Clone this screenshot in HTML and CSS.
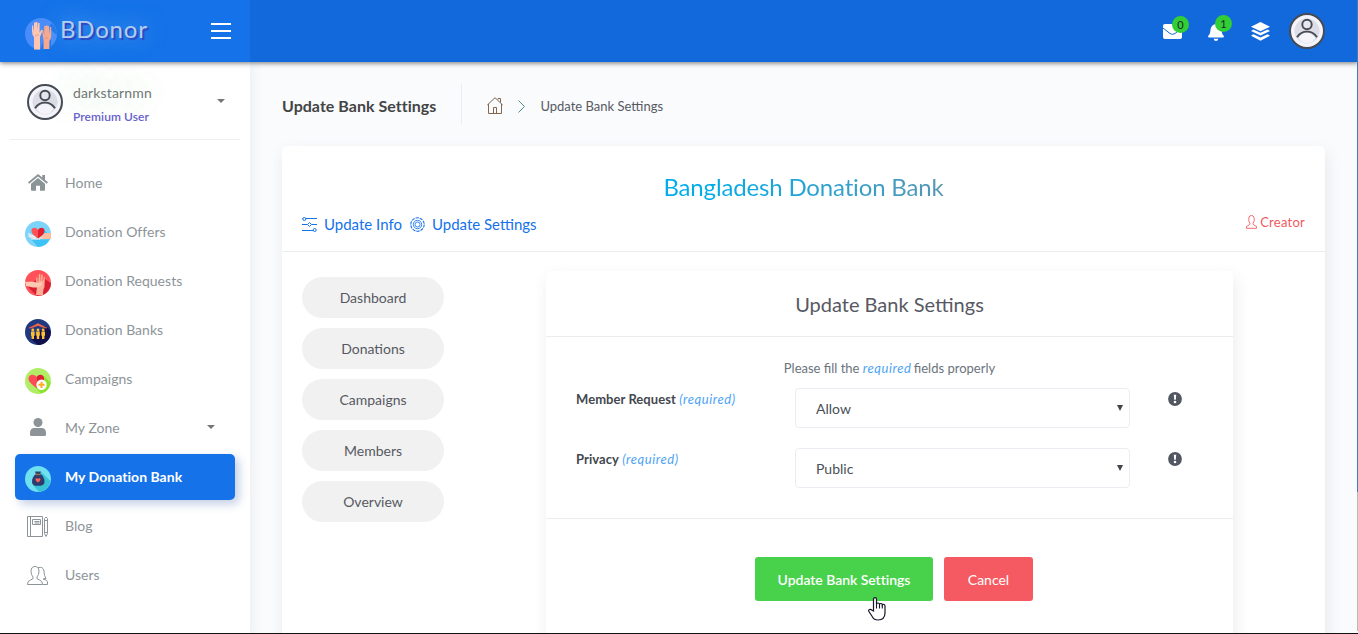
FILE: index.html
```html
<!DOCTYPE html>
<html lang="en">
<head>
<meta charset="utf-8">
<title>Update Bank Settings</title>
<link rel="stylesheet" href="styles.css">
</head>
<body>
<svg class="defs" width="0" height="0">
  <symbol id="avatar" viewBox="0 0 36 36">
    <circle cx="18" cy="18" r="17" fill="#f4f4fa" stroke="#464b54" stroke-width="2"/>
    <circle cx="18" cy="18" r="12.5" fill="#dcdde6"/>
    <path d="M9.500 25Q18 14 26.500 25L23 29Q18 31 13 29Z" fill="#f4f4fa"/>
    <circle cx="18" cy="11.500" r="4.700" fill="#e6e7ef" stroke="#464b54" stroke-width="1.900"/>
    <path d="M8 24.200C13 16.800 23 16.800 28 24.200" fill="none" stroke="#464b54" stroke-width="1.900"/>
  </symbol>
  <symbol id="info" viewBox="0 0 14 14">
    <circle cx="7" cy="7" r="6.900" fill="#515660"/>
    <path d="M5.800 2.700h2.400l-.4 5H6.200z" fill="#fff"/><circle cx="7" cy="10" r="1.300" fill="#fff"/>
  </symbol>
</svg>
<div class="app">
  <header class="header">
    <div class="brand">
      <svg class="brand-icon" width="32" height="32" viewBox="0 0 32 32">
        <circle cx="16" cy="16" r="16" fill="#4a8dfa"/>
        <path d="M26 5Q32 9 32 17L26 12V32H15z" fill="#1572e8" opacity=".8"/>
        <path d="M7 8L8 7l1 7V4.500h1.700V12V4h1.700v8L13 5h1.600v9.500l2-3 1 1L15 19v12.500H9V19q-2-2-2-6z" fill="#ffc5b3"/>
        <path d="M17 12h1.200l1 5V8h1.600v7V7.500h1.700V15V8h1.600v8l.8-7h1.300v9q0 3-1.800 5v8H18.500v-8.500z" fill="#f7a88e"/>
        <path d="M10 18q2-2 4-1M19 21q3-2 4-1" fill="none" stroke="#df8e79" stroke-width=".7"/>
      </svg>
      <span class="brand-name">BDonor</span>
      <svg class="burger" width="20" height="16" viewBox="0 0 20 16"><path d="M0 1h20M0 8h20M0 15h20" stroke="#fff" stroke-width="2"/></svg>
    </div>
    <nav class="topnav">
      <div class="top-item mail">
        <svg width="19" height="15" viewBox="0 0 19 15"><rect width="19" height="15" rx="2" fill="#fff"/><path d="M0 4l7 5.500q2.500 1.900 5 0L19 4" fill="none" stroke="#1269db" stroke-width="1"/></svg>
        <span class="count">0</span>
      </div>
      <div class="top-item bell">
        <svg width="16" height="18" viewBox="0 0 16 18"><path d="M8 0q1.200 0 1.200 1.300Q13 2.300 13.500 7c.3 3 .8 4.500 2.200 5.800q.7 1.700-.9 1.700H1.200q-1.600 0-.9-1.700C1.700 11.500 2.200 10 2.500 7Q3 2.300 6.800 1.300 6.800 0 8 0zM5.700 15.700h4.600Q10 18 8 18t-2.300-2.300z" fill="#fff"/></svg>
        <span class="count">1</span>
      </div>
      <svg class="layers" width="19" height="19" viewBox="0 0 19 19" fill="#fff"><path d="M9.500 0L19 4.700 9.500 9.200 0 4.700zM2.400 7.500l7.100 3.300 7.100-3.300L19 9 9.500 13.500 0 9zM2.400 12.200l7.100 3.300 7.100-3.300 2.400 1.600L9.500 18.700 0 13.800z"/></svg>
      <svg class="top-avatar" width="36" height="36"><use href="#avatar"/></svg>
    </nav>
  </header>

  <div class="body">
    <aside class="sidebar">
      <div class="user">
        <svg width="36" height="36"><use href="#avatar"/></svg>
        <div class="user-text"><span class="user-name">darkstarnmn</span><span class="user-role">Premium User</span></div>
        <i class="caret"></i>
      </div>
      <ul class="menu">
        <li class="item"><span class="icon"><svg width="20" height="17" viewBox="0 0 20 17" fill="#8d9498"><path d="M10 0l4.300 3.500V1H17v4.800l3 2.500-1.200 1.400L10 2.600 1.200 9.700 0 8.300z"/><path d="M10 4l7 5.800V16q0 .8-.8.800H12v-5H8v5H3.800Q3 16.800 3 16V9.800z"/></svg></span>Home</li>
        <li class="item"><span class="icon pic"><svg width="26" height="26" viewBox="0 0 26 26"><circle cx="13" cy="13" r="13" fill="#7dd4fb"/><path d="M6 18L19 9l6.800 6A13 13 0 0 1 13 26z" fill="#3cc2f4"/><path d="M3 13l6 2h8l3-3h6v6l-6 .3H9L4 16.500z" fill="#d5dce2"/><path d="M16 15l4-3h6v6h-8z" fill="#ffbd9f"/><path d="M3 12.500l7 3M3.500 15l7 1.500M6 18h9" stroke="#f4f5f6"/><path d="M13 17.500C7 13.500 6.500 11.500 6.500 9.500 6.500 6.500 11 5.500 13 9z" fill="#ff5157"/><path d="M13 17.500C19 13.500 19.500 11.500 19.500 9.500 19.500 6.500 15 5.500 13 9z" fill="#e31e2d"/></svg></span>Donation Offers</li>
        <li class="item"><span class="icon pic"><svg width="26" height="26" viewBox="0 0 26 26"><circle cx="13" cy="13" r="13" fill="#ff5157"/><path d="M0 14L18 8l8 5A13 13 0 0 1 17 25.300L12 26 4 18z" fill="#d91e32"/><path d="M11 25l1-8-1-7 1-4 1 7 1-9 1.300.2V12l1-7.500 1.400.2V12l1-5 1.200.3-.5 10Q18 19 18 25.500z" fill="#ffae98"/><path d="M0 12l8-.5 5 1.500 4-1v3l-4 2.500H8L1 16z" fill="#ffc8b3"/></svg></span>Donation Requests</li>
        <li class="item"><span class="icon pic"><svg width="26" height="26" viewBox="0 0 26 26"><circle cx="13" cy="13" r="13" fill="#203a82"/><path d="M21 7l4.700 5A13 13 0 0 1 13 26L6 20z" fill="#11104d"/><path d="M4 9l9-4.500L22 9H20L13 6.500 6 9z" fill="#ff7652" stroke="#dc553c" stroke-width=".6"/><g fill="#ffc02f"><circle cx="7.800" cy="11" r="1.400"/><circle cx="13" cy="11" r="1.400"/><circle cx="18.200" cy="11" r="1.400"/><path d="M6 12.500h3.600v4.200H9V20H6.600v-3.300H6zM11.200 12.500h3.600v4.200h-.6V20h-2.400v-3.300h-.6zM16.400 12.500H20v4.200h-.6V20H17v-3.300h-.6z"/></g></svg></span>Donation Banks</li>
        <li class="item"><span class="icon pic"><svg width="26" height="26" viewBox="0 0 26 26"><circle cx="13" cy="13" r="13" fill="#b3ed68"/><path d="M8 17L19 8l6.500 7A13 13 0 0 1 16 25.500z" fill="#8ce22c"/><path d="M11.500 20C4 14.500 3.500 12.500 3.500 10.500 3.500 6.500 9 5.500 11.500 9z" fill="#ff4c57"/><path d="M11.500 20C18 15.500 19 13 19 10.500 19 6.500 14 5.500 11.500 9z" fill="#e21d35"/><circle cx="16.500" cy="16.800" r="5.200" fill="#fff"/><path d="M16.500 13.700v6.200M13.400 16.800h6.200" stroke="#ffab24" stroke-width="2"/></svg></span>Campaigns</li>
        <li class="item"><span class="icon"><svg width="16" height="18" viewBox="0 0 16 18" fill="#8d9498"><circle cx="8" cy="4.500" r="4.500"/><path d="M4.500 10h7Q16 10 16 15v1.500q0 1.500-1.500 1.500h-13Q0 18 0 16.500V15q0-5 4.500-5z"/></svg></span>My Zone<i class="caret"></i></li>
        <li class="item active"><span class="icon pic"><svg width="26" height="26" viewBox="0 0 26 26"><circle cx="13" cy="13" r="13" fill="#6fe0ef"/><path d="M16 6l9.500 9A13 13 0 0 1 14 26L8 19z" fill="#37c3d5"/><path d="M11 8h4.500q4 3 4 7.500 0 4-4 4.200h-5Q7 19.500 7 15.500 7 11 11 8z" fill="#2c3c6f"/><path d="M10 5.500h6L15 8.500h-4z" fill="#344266"/><path d="M10.500 8.500h5" stroke="#9c7350" stroke-width="1.300"/><path d="M13 16.500c-4-2.700-2.500-5.500 0-3.700 2.500-1.800 4 1 0 3.700z" fill="#ff6155"/></svg></span>My Donation Bank</li>
        <li class="item"><span class="icon low"><svg width="21" height="22" viewBox="0 0 21 22" fill="none" stroke="#8d9498"><path d="M.5.500h15v20H.5zM3.500.500v20M5.500 3.500h8v5h-8zM7.500 5.500h5M7.500 7h5M17.500 2.500q1.500-3 3 0v15l-1.500 3-1.500-3zM17.500 4.500h3M17.500 16.500h3"/></svg></span>Blog</li>
        <li class="item"><span class="icon low"><svg width="21" height="20" viewBox="0 0 21 20" fill="none" stroke="#8d9498"><path d="M.5 18.500q-.3-3.500 3-4.500 3.500-.8 2.500-3Q4 9 4 5q.2-4.500 4-4.500T12 5q0 4-2 6-1 2.200 2.500 3 3.300 1 3 4.500zM11 1.800q5-1.800 6 3.200 0 5 2 7.500l-3 .5q4 1 4.500 2.500v3h-4.500"/></svg></span>Users</li>
      </ul>
    </aside>

    <main class="main">
      <div class="page-head">
        <h1 class="page-title">Update Bank Settings</h1>
        <div class="crumbs">
          <svg class="crumb-home" width="16" height="17" viewBox="0 0 16 17" fill="none" stroke="#84654d"><path d="M.3 8L8 .7 15.700 8M1.500 7v9.500h13V7M6.500 16.500v-6h3v6M11 2.500V1.500h2.500v4"/></svg>
          <svg class="crumb-sep" width="7" height="13" viewBox="0 0 7 13" fill="none" stroke="#4d8f83"><path d="M.5.500l6 6-6 6"/></svg>
          <span>Update Bank Settings</span>
        </div>
      </div>

      <section class="card">
        <div class="card-head">
          <h2 class="bank-name">Bangladesh Donation Bank</h2>
          <div class="links">
            <a class="link"><svg width="15" height="15" viewBox="0 0 15 15" fill="none" stroke="#1572e8"><path d="M0 1.500h.5M4 1.500h11M0 7.500h5.500M9.500 7.500H15M0 13.500h11"/><circle cx="2.300" cy="2" r="1.500"/><path d="M5.500 7.500l2-2 2 2-2 2z"/><circle cx="12.700" cy="13" r="1.500"/></svg>Update Info</a>
            <a class="link gear"><svg width="15" height="15" viewBox="0 0 15 15" fill="none" stroke="#1572e8" stroke-width=".85"><circle cx="7.500" cy="7.500" r="6.700" stroke-width="1.100" stroke-dasharray="3.200 1"/><circle cx="7.500" cy="7.500" r="4.200"/><circle cx="7.500" cy="7.500" r="2.500"/></svg>Update Settings</a>
            <span class="creator"><svg width="11" height="14" viewBox="0 0 11 14" fill="none" stroke="#f25961" stroke-width=".9"><path d="M.5 13.300v-1.800L3.800 9.500Q4.500 8.500 3 6.500 2 .500 5.500.500T8 6.500Q6.500 8.500 7.200 9.500l3.300 2v1.800z"/></svg>Creator</span>
          </div>
        </div>
        <div class="card-body">
          <nav class="pills"><a>Dashboard</a><a>Donations</a><a>Campaigns</a><a>Members</a><a>Overview</a></nav>
          <form class="panel">
            <h3 class="panel-title">Update Bank Settings</h3>
            <div class="fields">
              <p class="hint">Please fill the <em>required</em> fields properly</p>
              <div class="field"><label><b>Member Request</b> <em>(required)</em></label><div class="select">Allow<i></i></div><svg class="info" width="14" height="14"><use href="#info"/></svg></div>
              <div class="field"><label><b>Privacy</b> <em>(required)</em></label><div class="select">Public<i></i></div><svg class="info" width="14" height="14"><use href="#info"/></svg></div>
            </div>
            <div class="actions"><button type="button" class="btn save">Update Bank Settings</button><button type="button" class="btn cancel">Cancel</button></div>
          </form>
        </div>
      </section>
    </main>
  </div>
  <svg class="cursor" width="18" height="24" viewBox="0 0 18 24"><path d="M5.500 14V2.500Q5.500.700 7 .700t1.500 1.800V7q.3-1 1.500-1t1.500 1.200q.3-.8 1.500-.7t1.300 1.300q.4-.7 1.500-.5T17 9v7q-.2 7-7 7-4 0-5.500-3L.8 14.300q-.5-1.300.7-1.800t2.200.5z" fill="#fff" stroke="#15152b" stroke-width="1.200"/><path d="M8.500 7v4.500M11.500 7.500v4M14.300 8v3.500" stroke="#15152b" stroke-width="1.100"/></svg>
  <div class="scrollbar"></div>
</div>
</body>
</html>
```
FILE: styles.css
```css
* { box-sizing: border-box; }
body { margin: 0; font-family: Lato, "Liberation Sans", sans-serif; font-size: 14px; color: #575962; }
h1, h2, h3, p, ul { margin: 0; padding: 0; }
svg { display: block; flex: none; }
.defs { position: absolute; }

.app { position: relative; width: 1358px; height: 634px; overflow: hidden; display: flex; flex-direction: column; background: #f9fbfd; border-bottom: 1px solid #111; }
.header { position: relative; z-index: 2; display: flex; flex: none; height: 62px; background: #1269db; box-shadow: 0 1px 5px rgba(0, 0, 0, .55); }
.brand { display: flex; align-items: center; width: 250px; padding: 0 19px 0 25px; background: #1572e8; }
.brand-icon { margin-top: 6px; }
.brand-name { margin: -4px 0 0 3px; font-size: 24px; line-height: 30px; letter-spacing: .8px; color: #b4cdec; text-shadow: 2px 2px 1px #2d46bd, 0 0 22px rgba(150, 220, 255, .7), 3px 62px 34px rgba(70, 210, 120, .3); }
.burger { margin-left: auto; margin-top: -1px; }
.topnav { display: flex; align-items: center; margin-left: auto; padding-right: 33px; }
.top-item { position: relative; }
.mail { margin-right: 26px; }
.bell { margin: 1px 27px 0 0; }
.count { position: absolute; left: 9px; top: -8px; width: 17px; height: 17px; border-radius: 50%; background: #31ce36; color: #20232b; font-size: 11px; line-height: 17px; text-align: center; }
.bell .count { left: 7px; top: -8px; }
.layers { margin-right: 19px; }

.body { display: flex; flex: 1; min-height: 0; }
.sidebar { width: 250px; flex: none; background: #fff; box-shadow: 4px 4px 10px rgba(69, 65, 78, .06); }
.user { display: flex; align-items: center; height: 78px; margin: 0 10px; padding: 2px 15px 0 17px; border-bottom: 1px solid #eee; }
.user-text { display: flex; flex-direction: column; margin: 7px 0 0 10px; }
.user-name { font-size: 14px; line-height: 20px; color: #777; letter-spacing: .15px; }
.user-role { margin-top: 4px; font-size: 12px; line-height: 20px; font-weight: 600; color: #6861ce; letter-spacing: .08px; }
.user .caret { margin-top: -2px; }
.caret { margin-left: auto; border: 4px solid transparent; border-top-color: #777; border-bottom: 0; }
.menu { display: flex; flex-direction: column; gap: 3px; padding: 20px 15px; list-style: none; }
.item { display: flex; align-items: center; height: 46px; padding: 0 20px 2px 10px; border-radius: 5px; font-size: 14px; color: #8d9498; letter-spacing: .03px; }
.icon { display: flex; justify-content: center; width: 26px; margin-right: 14px; }
.icon svg { margin-left: -1px; }
.pic svg { margin-left: 0; }
.pic { padding-top: 5px; }
.low { padding-top: 3px; }
.item.active { background: #1572e8; color: #fff; font-weight: 700; box-shadow: 4px 4px 10px rgba(21, 70, 150, .26); }

.main { flex: 1; padding: 21px 33px 0 32px; }
.page-head { display: flex; align-items: center; height: 42px; }
.page-title { padding-top: 3px; font-size: 16px; font-weight: 700; line-height: 24px; color: #444; letter-spacing: 0.03px; }
.crumbs { display: flex; align-items: center; height: 40px; margin-left: 25px; padding: 4px 0 0 25px; border-left: 1px solid #ebedf2; font-size: 13px; color: #575962; }
.crumb-home { margin-top: -2px; }
.crumb-sep { margin: 0 15px; }
.card { margin-top: 21px; height: 560px; border-radius: 5px; background: #fff; box-shadow: 2px 6px 15px rgba(69, 65, 78, .1); }
.card-head { height: 106px; padding: 23px 20px 0; border-bottom: 1px solid #ebecec; }
.bank-name { width: max-content; margin: 0 auto; font-size: 24px; font-weight: 400; line-height: 36px; letter-spacing: -.16px; color: transparent; background: linear-gradient(90deg, #00ace9 15%, #5697b5); background-clip: text; }
.links { display: flex; align-items: center; margin-top: 6px; height: 26px; font-size: 15px; color: #1572e8; }
.link { display: flex; align-items: center; gap: 7px; }
.gear { margin-left: 8px; }
.creator { display: flex; align-items: center; gap: 3px; margin: -4px 0 0 auto; font-size: 13px; letter-spacing: .25px; color: #f25961; }
.card-body { display: flex; justify-content: space-between; padding: 20px 92px 0 20px; }
.pills { display: flex; flex-direction: column; gap: 10px; width: 142px; padding-top: 5px; }
.pills a { height: 41px; border-radius: 21px; background: #f1f1f1; color: #575962; font-size: 14px; line-height: 42px; text-align: center; }
.panel { width: 687px; height: 440px; margin-top: -1px; border-radius: 5px; background: #fff; box-shadow: 2px 6px 15px rgba(69, 65, 78, .1); }
.panel-title { height: 66px; border-bottom: 1px solid #ebecec; font-size: 20px; font-weight: 400; line-height: 66px; text-align: center; }
.fields { height: 182px; padding: 20px 30px 0; border-bottom: 1px solid #ebecec; }
.hint { height: 31px; font-size: 13px; line-height: 22px; color: #6b737c; text-align: center; }
em { color: #4da3f5; letter-spacing: .55px; }
.hint em { margin-right: -1px; }
.field { display: flex; height: 60px; font-size: 13px; }
.field label { width: 219px; line-height: 22px; color: #444850; }
.field b { letter-spacing: .06px; }
.select { position: relative; width: 335px; height: 40px; padding-left: 20px; border: 1px solid #ebedf2; border-radius: 4px; font-size: 14px; line-height: 40px; color: #495057; }
.select i { position: absolute; right: 6px; top: 16px; border: 3px solid transparent; border-top: 6px solid #41464c; border-bottom: 0; }
.info { margin: 4px 0 0 38px; }
.actions { display: flex; justify-content: center; gap: 11px; padding: 38px 0 0 9px; }
.btn { height: 44px; padding: 0; border: 0; border-radius: 3px; color: #fff; font: 400 14px Lato, sans-serif; }
.save { width: 178px; background: #48d24b; font-weight: 600; letter-spacing: -.04px; }
.cancel { width: 89px; background: #f55a62; }
.cursor { position: absolute; left: 868px; top: 597px; z-index: 4; }
.scrollbar { position: absolute; right: 0; top: 0; z-index: 5; width: 1px; height: 631px; background: linear-gradient(#3f7db8 492px, #b9b9b9 492px); }
```
